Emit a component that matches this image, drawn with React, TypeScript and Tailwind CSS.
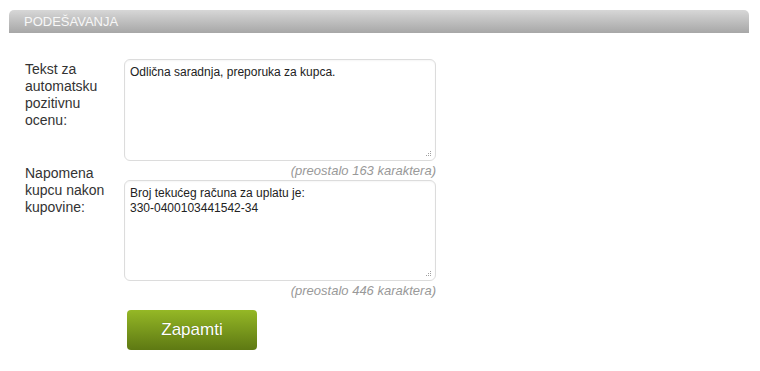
import React from "react";

function Grip() {
  return (
    <svg
      className="absolute right-[4px] bottom-[4px] pointer-events-none"
      width="7"
      height="7"
      viewBox="0 0 7 7"
    >
      <rect x="5" y="1" width="1" height="1" fill="#a0a0a0" />
      <rect x="3" y="3" width="1" height="1" fill="#a0a0a0" />
      <rect x="5" y="3" width="1" height="1" fill="#a0a0a0" />
      <rect x="1" y="5" width="1" height="1" fill="#a0a0a0" />
      <rect x="3" y="5" width="1" height="1" fill="#a0a0a0" />
      <rect x="5" y="5" width="1" height="1" fill="#a0a0a0" />
    </svg>
  );
}

function Area({ value, h }: { value: string; h: string }) {
  return (
    <div className={`relative w-[312px] ${h}`}>
      <textarea
        defaultValue={value}
        className="block w-full h-full resize-none rounded-[6px] border border-[#dcdcdc] bg-white pl-[5px] pr-[5px] pt-[5px] text-[12px] leading-[15px] text-[#222] outline-none shadow-[inset_0_1px_2px_rgba(0,0,0,0.04)]"
        style={{ fontFamily: '"Liberation Sans", Arial, sans-serif' }}
      />
      <Grip />
    </div>
  );
}

function Counter({ n }: { n: number }) {
  return (
    <div className="w-[312px] h-[19px] text-right text-[13px] leading-[20px] italic text-[#999]">
      (preostalo {n} karaktera)
    </div>
  );
}

export default function App() {
  return (
    <div
      className="bg-white w-[760px] h-[371px] pt-[10px]"
      style={{ fontFamily: '"Liberation Sans", Arial, sans-serif' }}
    >
      <div className="ml-[9px] w-[740px]">
        <div className="h-[23px] rounded-t-[5px] bg-gradient-to-b from-[#d7d7d7] to-[#a7a7a7] pl-[15px] text-[13px] leading-[24px] text-[#f7f7f7]">
          PODEŠAVANJA
        </div>
        <div className="mt-[26px] pl-[16px] grid grid-cols-[99px_312px]">
          <div className="pt-[2px] text-[14px] leading-[17px] text-[#333]">
            Tekst za automatsku pozitivnu ocenu:
          </div>
          <Area value="Odlična saradnja, preporuka za kupca." h="h-[102px]" />

          <div className="pt-[4px] text-[14px] leading-[17px] text-[#333]">
            Napomena kupcu nakon kupovine:
          </div>
          <div className="flex flex-col">
            <Counter n={163} />
            <Area
              value={"Broj tekućeg računa za uplatu je:\n330-0400103441542-34"}
              h="h-[101px]"
            />
            <Counter n={446} />
          </div>

          <div />
          <div className="pt-[10px] pl-[3px]">
            <button className="w-[130px] h-[40px] rounded-[4px] bg-gradient-to-b from-[#95b826] to-[#5e7913] text-white text-[17px] leading-[40px] [text-shadow:0_0_1px_rgba(0,0,0,0.35)]">
              Zapamti
            </button>
          </div>
        </div>
      </div>
    </div>
  );
}
